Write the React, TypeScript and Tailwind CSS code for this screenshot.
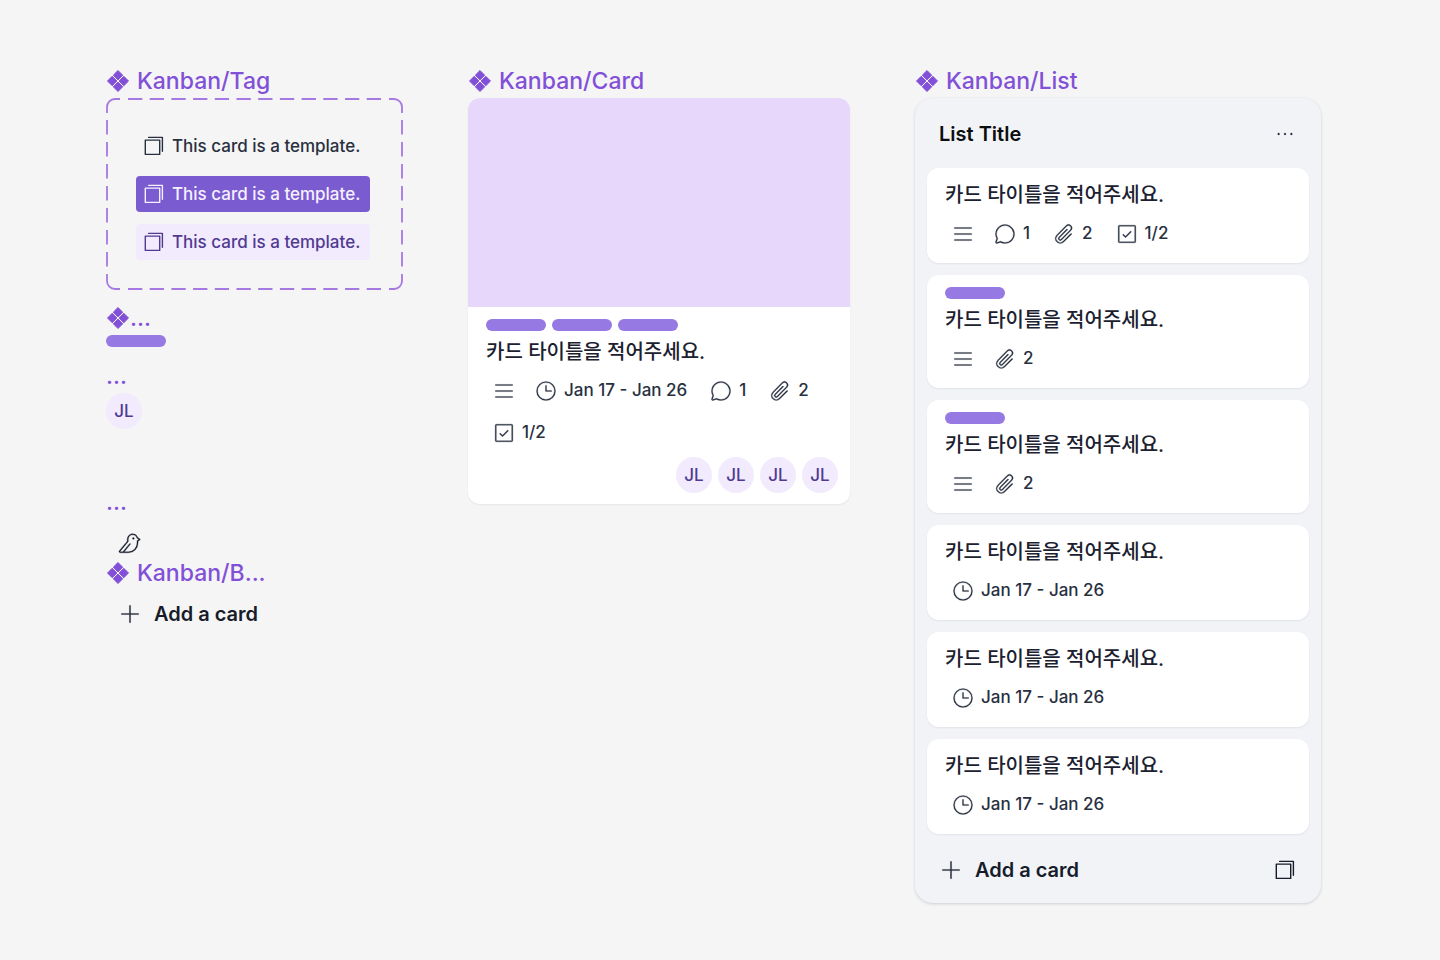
import type { ReactNode } from "react";
import {
  PiBirdLight,
  PiChatCircleLight,
  PiCheckSquareLight,
  PiClockLight,
  PiDotsThreeLight,
  PiListLight,
  PiPaperclipLight,
  PiPlusLight,
} from "react-icons/pi";

const CARD_TITLE = "카드 타이틀을 적어주세요.";

function ComponentMark() {
  return (
    <svg viewBox="0 0 24 24" className="size-6 shrink-0" fill="currentColor" stroke="currentColor" strokeWidth="1" strokeLinejoin="round" aria-hidden="true">
      <path d="M12 1.5 16.7 6.2 12 10.9 7.3 6.2Z" />
      <path d="M12 13.1 16.7 17.8 12 22.5 7.3 17.8Z" />
      <path d="M6.2 7.3 10.9 12 6.2 16.7 1.5 12Z" />
      <path d="M17.8 7.3 22.5 12 17.8 16.7 13.1 12Z" />
    </svg>
  );
}

function TemplateIcon() {
  return (
    <svg viewBox="0 0 24 24" className="size-6 shrink-0" fill="none" stroke="currentColor" strokeWidth="1.4" strokeLinejoin="round" strokeLinecap="round" aria-hidden="true">
      <path d="M3.3 6.1H17.7V20.4H3.3Z" />
      <path d="M6.6 3.4H20.4V17.2" />
    </svg>
  );
}

function Heading({ children, mark = true }: { children: ReactNode; mark?: boolean }) {
  return (
    <h2 className="flex h-9 items-center pt-0.5 text-[23px] font-medium text-[#8250d8]">
      {mark && <ComponentMark />}
      {children}
    </h2>
  );
}

function DashedFrame() {
  return (
    <svg viewBox="0 0 297 192" preserveAspectRatio="none" className="absolute inset-0 size-full" fill="none" stroke="#a678e2" strokeWidth="1.8" aria-hidden="true">
      <path d="M1 15V9a8 8 0 0 1 8-8h5" />
      <path d="M283 1h5a8 8 0 0 1 8 8v6" />
      <path d="M296 176v7a8 8 0 0 1-8 8h-5" />
      <path d="M14 191H9a8 8 0 0 1-8-8v-7" />
      <path d="M22 1H275M22 191H275" strokeDasharray="14.3 7.4" />
      <path d="M1 22V169M296 22V169" strokeDasharray="14.4 7.6" />
    </svg>
  );
}

function TemplateTag({ tone }: { tone: string }) {
  return (
    <div className={`flex h-9 w-fit items-center gap-1.5 whitespace-nowrap rounded pl-1.5 pr-2.5 text-[17px] font-medium leading-[26px] ${tone}`}>
      <TemplateIcon />
      <span>This card is a template.</span>
    </div>
  );
}

function Label() {
  return <div className="h-3 w-[60px] rounded-full bg-[#9779e4]" />;
}

function Avatar() {
  return (
    <div className="flex size-9 items-center justify-center rounded-full bg-[#f2eafd] text-[17px] font-medium leading-[26px] text-[#503a92]">JL</div>
  );
}

function Meta({ icon, children }: { icon: ReactNode; children?: ReactNode }) {
  return (
    <div className="flex h-9 items-center text-[17px] font-medium text-[#28303f]">
      <span className="flex text-2xl [&_svg]:stroke-[3px]">{icon}</span>
      {children && <span className="pl-1.5 pr-1">{children}</span>}
    </div>
  );
}

type CardProps = {
  cover?: boolean;
  labels?: number;
  description?: boolean;
  dates?: string;
  comments?: number;
  files?: number;
  checklist?: string;
  members?: number;
};

function Card({ cover, labels = 0, description, dates, comments, files, checklist, members = 0 }: CardProps) {
  return (
    <article className="overflow-hidden rounded-xl bg-white shadow-[0_1px_2px_rgba(30,35,60,0.07)]">
      {cover && <div className="h-[209px] bg-[#e6d7fb]" />}
      <div className="flex flex-col gap-1.5 pb-[11px] pl-[18px] pr-3 pt-3">
        {labels > 0 && (
          <div className="flex gap-1.5">
            {Array.from({ length: labels }, (_, i) => (
              <Label key={i} />
            ))}
          </div>
        )}
        <h4 className="text-xl font-medium leading-[30px] text-[#1b2130]">{CARD_TITLE}</h4>
        <div className="flex flex-wrap gap-x-[18px] gap-y-1.5 px-1.5">
          {description && <Meta icon={<PiListLight />} />}
          {dates && <Meta icon={<PiClockLight />}>{dates}</Meta>}
          {comments && <Meta icon={<PiChatCircleLight />}>{comments}</Meta>}
          {files && <Meta icon={<PiPaperclipLight />}>{files}</Meta>}
          {checklist && <Meta icon={<PiCheckSquareLight />}>{checklist}</Meta>}
        </div>
        {members > 0 && (
          <div className="flex justify-end gap-1.5">
            {Array.from({ length: members }, (_, i) => (
              <Avatar key={i} />
            ))}
          </div>
        )}
      </div>
    </article>
  );
}

function AddCardButton() {
  return (
    <button type="button" className="flex h-12 items-center gap-3 px-3 text-xl font-semibold text-[#171c2b]">
      <PiPlusLight className="stroke-[3px] text-2xl" />
      Add a card
    </button>
  );
}

const listCards: CardProps[] = [
  { description: true, comments: 1, files: 2, checklist: "1/2" },
  { labels: 1, description: true, files: 2 },
  { labels: 1, description: true, files: 2 },
  { dates: "Jan 17 - Jan 26" },
  { dates: "Jan 17 - Jan 26" },
  { dates: "Jan 17 - Jan 26" },
];

export default function App() {
  return (
    <main className="grid min-h-screen grid-cols-[297fr_382fr_406fr] items-start gap-[65px] bg-[#f5f5f5] pb-14 pl-[106px] pr-[119px] pt-[62px] font-['Inter','Noto_Sans_CJK_KR',sans-serif]">
      <section>
        <Heading>
          <span className="pl-[7px]">Kanban/Tag</span>
        </Heading>
        <div className="relative flex flex-col gap-3 p-[30px]">
          <DashedFrame />
          <TemplateTag tone="text-[#28303f]" />
          <TemplateTag tone="bg-[#7a5bd0] text-[#f6f0ff]" />
          <TemplateTag tone="bg-[#f2eafd] text-[#503a92]" />
        </div>
        <div className="mt-[9px]">
          <Heading>...</Heading>
          <Label />
        </div>
        <div className="mt-2.5">
          <Heading mark={false}>...</Heading>
          <Avatar />
        </div>
        <div className="mt-[54px]">
          <Heading mark={false}>...</Heading>
          <div className="h-[35px] px-3 pt-[13px] text-2xl text-[#171c2b]">
            <PiBirdLight className="stroke-[3px]" />
          </div>
        </div>
        <Heading>
          <span className="pl-[7px]">Kanban/B...</span>
        </Heading>
        <AddCardButton />
      </section>

      <section>
        <Heading>
          <span className="pl-[7px]">Kanban/Card</span>
        </Heading>
        <Card cover labels={3} description dates="Jan 17 - Jan 26" comments={1} files={2} checklist="1/2" members={4} />
      </section>

      <section>
        <Heading>
          <span className="pl-[7px]">Kanban/List</span>
        </Heading>
        <div className="rounded-[18px] bg-[#f1f3f7] px-3 pb-[9px] pt-3 shadow-[0_1px_3px_rgba(30,35,60,0.18)]">
          <header className="flex h-12 items-center justify-between px-3">
            <h3 className="text-xl font-semibold text-[#0c0d10]">List Title</h3>
            <button type="button" aria-label="List actions" className="text-2xl text-[#171c2b]">
              <PiDotsThreeLight className="stroke-[3px]" />
            </button>
          </header>
          <div className="mt-2.5 flex flex-col gap-3">
            {listCards.map((card, i) => (
              <Card key={i} {...card} />
            ))}
          </div>
          <footer className="mt-3 flex items-center justify-between pr-3">
            <AddCardButton />
            <button type="button" aria-label="Create from template" className="text-[#171c2b]">
              <TemplateIcon />
            </button>
          </footer>
        </div>
      </section>
    </main>
  );
}
